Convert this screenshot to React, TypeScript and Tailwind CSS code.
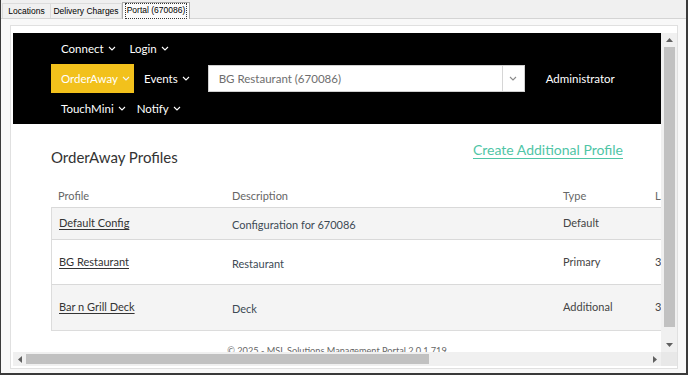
import React from 'react';

// small white/gray chevron used in the nav
const Caret = ({ color = '#ffffff' }: { color?: string }) => (
  <svg width="8" height="5" viewBox="0 0 8 5" className="shrink-0">
    <path d="M1 1l3 3 3-3" stroke={color} strokeWidth="1.1" fill="none" />
  </svg>
);

const NavItem = ({ label }: { label: string }) => (
  <div className="flex items-center gap-[4px] px-[7px] text-white">
    <span>{label}</span>
    <Caret />
  </div>
);

const Tri = ({ dir }: { dir: 'up' | 'down' | 'left' | 'right' }) => {
  const d = {
    up: 'M0 4L3.5 0L7 4Z',
    down: 'M0 0L7 0L3.5 4Z',
    left: 'M4 0L4 7L0 3.5Z',
    right: 'M0 0L4 3.5L0 7Z',
  }[dir];
  const vertical = dir === 'up' || dir === 'down';
  return (
    <svg width={vertical ? 7 : 4} height={vertical ? 4 : 7} viewBox={vertical ? '0 0 7 4' : '0 0 4 7'}>
      <path d={d} fill="#606060" />
    </svg>
  );
};

const rows = [
  { profile: 'Default Config', desc: 'Configuration for 670086', type: 'Default', extra: '', h: 'h-[32px]', bg: 'bg-[#f4f4f4]' },
  { profile: 'BG Restaurant', desc: 'Restaurant', type: 'Primary', extra: '3', h: 'h-[45px]', bg: 'bg-white' },
  { profile: 'Bar n Grill Deck', desc: 'Deck', type: 'Additional', extra: '3', h: 'h-[46px]', bg: 'bg-[#f4f4f4]' },
];

export default function App() {
  return (
    <div className="w-[688px] h-[375px] bg-[#f0f0f0] border-l border-r-2 border-b-2 border-[#3a3a3a] flex flex-col font-['Lato',sans-serif] overflow-hidden">
      {/* tab strip */}
      <div className="h-[18px] flex items-end pl-[1px] font-['Liberation_Sans',Arial,sans-serif] text-[8.5px] text-black">
        <div className="w-[48px] h-[15px] flex items-center justify-center border-t border-l border-[#dcdcdc]">Locations</div>
        <div className="w-[72px] h-[15px] flex items-center justify-center border-t border-l border-r border-[#dcdcdc]">Delivery Charges</div>
        <div className="w-[68px] h-[17px] flex items-center justify-center bg-[#fbfbfb] border border-b-0 border-[#a9a9a9] mb-[-1px] relative z-10">
          <span className="px-[1px] pb-[1px] border border-dotted border-[#333]">Portal (670086)</span>
        </div>
      </div>

      {/* tab page */}
      <div className="flex-1 border-t border-[#d4d4d4] bg-[#f8f8f8] pl-[9px] pr-[8px] pt-[6px] pb-[4px]">
        <div className="h-[344px] border border-[#e0e0e0] bg-white pl-[2px] pt-[7px] flex flex-col">
          <div className="flex">
            {/* page content */}
            <div className="w-[648px] h-[319px] overflow-hidden bg-white">
              <div className="h-[91px] bg-black pl-[38px] flex flex-col text-[11.5px]">
                <div className="h-[31px] flex items-center pl-[3px]">
                  <NavItem label="Connect" />
                  <NavItem label="Login" />
                </div>
                <div className="h-[29px] flex items-center">
                  <div className="h-[29px] w-[83px] bg-[#f2c11c] flex items-center gap-[4px] pl-[10px] text-white">
                    <span>OrderAway</span>
                    <Caret color="#f5f5f5" />
                  </div>
                  <div className="flex items-center gap-[4px] pl-[10px] text-white">
                    <span>Events</span>
                    <Caret />
                  </div>
                  <div className="ml-[18px] w-[317px] h-[27px] bg-white border border-[#cfcfcf] flex items-center">
                    <span className="flex-1 pl-[10px] text-[#6e6e6e]">BG Restaurant (670086)</span>
                    <div className="w-[22px] h-full border-l border-[#d6d6d6] flex items-center justify-center">
                      <Caret color="#8a8a8a" />
                    </div>
                  </div>
                  <span className="ml-[21px] text-white">Administrator</span>
                </div>
                <div className="h-[31px] flex items-center pl-[3px]">
                  <NavItem label="TouchMini" />
                  <div className="-ml-[3px]">
                    <NavItem label="Notify" />
                  </div>
                </div>
              </div>

              <div className="px-[38px] pt-[16px]">
                <div className="flex justify-between items-start">
                  <h1 className="mt-[7px] leading-[20px] text-[15px] text-[#333]">OrderAway Profiles</h1>
                  <a className="mt-[1px] leading-[18px] text-[14px] text-[#4fc5a6] underline underline-offset-[3px]">Create Additional Profile</a>
                </div>

                <div className="mt-[18px] w-[720px] text-[11px]">
                  <div className="h-[22px] flex items-center text-[#666]">
                    <div className="w-[173px] pl-[7px]">Profile</div>
                    <div className="w-[331px] pl-[8px]">Description</div>
                    <div className="w-[92px] pl-[8px]">Type</div>
                    <div className="pl-[8px]">Last Updated</div>
                  </div>
                  <div className="border-l border-b border-[#dcdcdc]">
                    {rows.map((r) => (
                      <div key={r.profile} className={`${r.h} ${r.bg} border-t border-[#d9d9d9] flex items-center text-[#444]`}>
                        <div className="w-[172px] pl-[7px]">
                          <a className="text-[#333] underline underline-offset-2">{r.profile}</a>
                        </div>
                        <div className="w-[331px] pl-[8px] pt-[4px] text-[#3d4a55]">{r.desc}</div>
                        <div className="w-[92px] pl-[8px]">{r.type}</div>
                        <div className="pl-[8px]">{r.extra}</div>
                      </div>
                    ))}
                  </div>
                </div>
              </div>

              <div className="pt-[14px] text-center text-[9.2px] leading-[11px] text-[#666]">
                © 2025 - MSL Solutions Management Portal 2.0.1.719
              </div>
            </div>

            {/* vertical scrollbar */}
            <div className="w-[16px] h-[319px] bg-[#f0f0f0] flex flex-col items-center">
              <div className="h-[14px] flex items-center justify-center">
                <Tri dir="up" />
              </div>
              <div className="w-[11px] h-[280px] bg-[#c1c1c1]" />
              <div className="flex-1" />
              <div className="h-[14px] flex items-center justify-center">
                <Tri dir="down" />
              </div>
            </div>
          </div>

          {/* horizontal scrollbar */}
          <div className="flex h-[14px]">
            <div className="w-[648px] bg-[#f0f0f0] flex items-center">
              <div className="w-[13px] flex items-center justify-center">
                <Tri dir="left" />
              </div>
              <div className="w-[403px] h-[10px] bg-[#c1c1c1]" />
              <div className="flex-1" />
              <div className="w-[13px] flex items-center justify-center">
                <Tri dir="right" />
              </div>
            </div>
            <div className="w-[16px] bg-[#e8e8e8]" />
          </div>
        </div>
      </div>
    </div>
  );
}
